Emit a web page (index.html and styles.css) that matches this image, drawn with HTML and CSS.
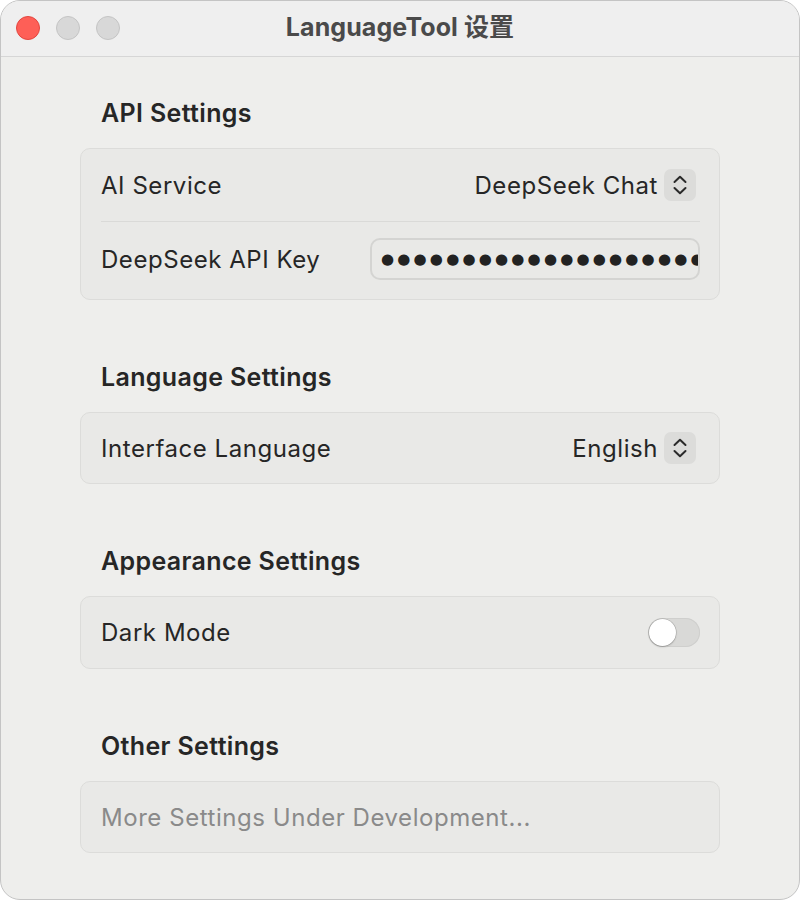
FILE: index.html
```html
<!DOCTYPE html>
<html>
<head>
<meta charset="utf-8">
<link rel="stylesheet" href="styles.css">
</head>
<body>
<div class="window">
  <div class="titlebar">
    <div class="lights">
      <span class="light red"></span>
      <span class="light gray"></span>
      <span class="light gray"></span>
    </div>
    <div class="title">LanguageTool 设置</div>
  </div>
  <div class="content">
    <section class="section">
      <h2 class="heading">API Settings</h2>
      <div class="card">
        <div class="row row-top">
          <span class="label">AI Service</span>
          <div class="select">
            <span class="value">DeepSeek Chat</span>
            <span class="stepper"><svg width="14" height="20" viewBox="0 0 14 20"><path d="M1.5 7 L7 1.8 L12.5 7 M1.5 13 L7 18.2 L12.5 13" fill="none" stroke="#2a2a2a" stroke-width="2" stroke-linecap="round" stroke-linejoin="round"/></svg></span>
          </div>
        </div>
        <div class="divider"></div>
        <div class="row row-bottom">
          <span class="label">DeepSeek API Key</span>
          <div class="field"><span class="dots">●●●●●●●●●●●●●●●●●●●●●</span></div>
        </div>
      </div>
    </section>
    <section class="section">
      <h2 class="heading">Language Settings</h2>
      <div class="card">
        <div class="row">
          <span class="label">Interface Language</span>
          <div class="select">
            <span class="value">English</span>
            <span class="stepper"><svg width="14" height="20" viewBox="0 0 14 20"><path d="M1.5 7 L7 1.8 L12.5 7 M1.5 13 L7 18.2 L12.5 13" fill="none" stroke="#2a2a2a" stroke-width="2" stroke-linecap="round" stroke-linejoin="round"/></svg></span>
          </div>
        </div>
      </div>
    </section>
    <section class="section">
      <h2 class="heading">Appearance Settings</h2>
      <div class="card">
        <div class="row row-toggle">
          <span class="label">Dark Mode</span>
          <span class="toggle"><span class="knob"></span></span>
        </div>
      </div>
    </section>
    <section class="section">
      <h2 class="heading">Other Settings</h2>
      <div class="card">
        <div class="row">
          <span class="label muted">More Settings Under Development...</span>
        </div>
      </div>
    </section>
  </div>
</div>
</body>
</html>
```
FILE: styles.css
```css
html, body {
  margin: 0;
  padding: 0;
  background: #ffffff;
}
body {
  font-family: Inter, "Noto Sans", "Noto Sans CJK SC", sans-serif;
  color: #262626;
}
.window {
  width: 800px;
  height: 900px;
  box-sizing: border-box;
  border-radius: 20px;
  overflow: hidden;
  background: #eeeeec;
  border: 1px solid #c4c4c4;
  display: flex;
  flex-direction: column;
}
.titlebar {
  height: 55px;
  flex: none;
  background: #efefef;
  border-bottom: 1px solid #d6d6d6;
  display: flex;
  align-items: center;
  justify-content: center;
  position: relative;
}
.lights {
  position: absolute;
  left: 15px;
  top: 15px;
  display: flex;
  gap: 16px;
}
.light {
  width: 24px;
  height: 24px;
  border-radius: 50%;
  box-sizing: border-box;
}
.light.red {
  background: #fe5f57;
  border: 1px solid #e2463f;
}
.light.gray {
  background: #d8d8d8;
  border: 1px solid #c4c4c4;
}
.title {
  font-size: 25px;
  font-weight: 700;
  color: #4a4a4a;
  font-family: Inter, "Noto Sans CJK SC", sans-serif;
  line-height: 30px;
  margin-top: -4px;
  letter-spacing: 0.1px;
}
.content {
  padding: 38px 79px 0 79px;
  display: flex;
  flex-direction: column;
  gap: 59px;
}
.section {
  display: flex;
  flex-direction: column;
}
.heading {
  margin: 0 0 17px 21px;
  height: 36px;
  line-height: 36px;
  font-size: 25px;
  font-weight: 600;
  color: #262626;
  letter-spacing: 0.35px;
}
.card {
  background: #e9e9e7;
  border: 1px solid #dcdcda;
  border-radius: 10px;
  padding: 0 19px 0 20px;
  display: flex;
  flex-direction: column;
}
.row {
  height: 70px;
  display: flex;
  align-items: center;
  justify-content: space-between;
}
.row.row-top {
  height: 72px;
}
.row.row-bottom {
  height: 74px;
  padding-bottom: 3px;
}
.row.row-toggle {
  height: 71px;
}
.divider {
  height: 1px;
  background: #dadad8;
}
.label {
  font-size: 24px;
  color: #262626;
  letter-spacing: 0.55px;
}
.label.muted {
  color: #8a8a8a;
}
.select {
  display: flex;
  align-items: center;
  gap: 6px;
}
.value {
  font-size: 24px;
  color: #262626;
  letter-spacing: 0.55px;
}
.stepper {
  width: 32px;
  height: 32px;
  border-radius: 7px;
  background: #dcdcda;
  display: flex;
  align-items: center;
  justify-content: center;
  margin-right: 4px;
}
.field {
  width: 330px;
  height: 42px;
  box-sizing: border-box;
  border: 2px solid #d4d4d2;
  border-radius: 10px;
  overflow: hidden;
  display: flex;
  align-items: center;
  padding-left: 9px;
  white-space: nowrap;
}
.dots {
  font-family: "DejaVu Sans", sans-serif;
  font-size: 15px;
  letter-spacing: 3.2px;
  color: #222;
}
.toggle {
  width: 52px;
  height: 29px;
  border-radius: 15px;
  background: #d9d9d7;
  box-shadow: inset 0 0 0 1px #cfcfcd;
  display: flex;
  align-items: center;
  padding-left: 1px;
  box-sizing: border-box;
}
.knob {
  width: 27px;
  height: 27px;
  border-radius: 50%;
  background: #ffffff;
  box-shadow: 0 0 0 0.5px rgba(0,0,0,0.2), 0 1px 2px rgba(0,0,0,0.2);
}
```
